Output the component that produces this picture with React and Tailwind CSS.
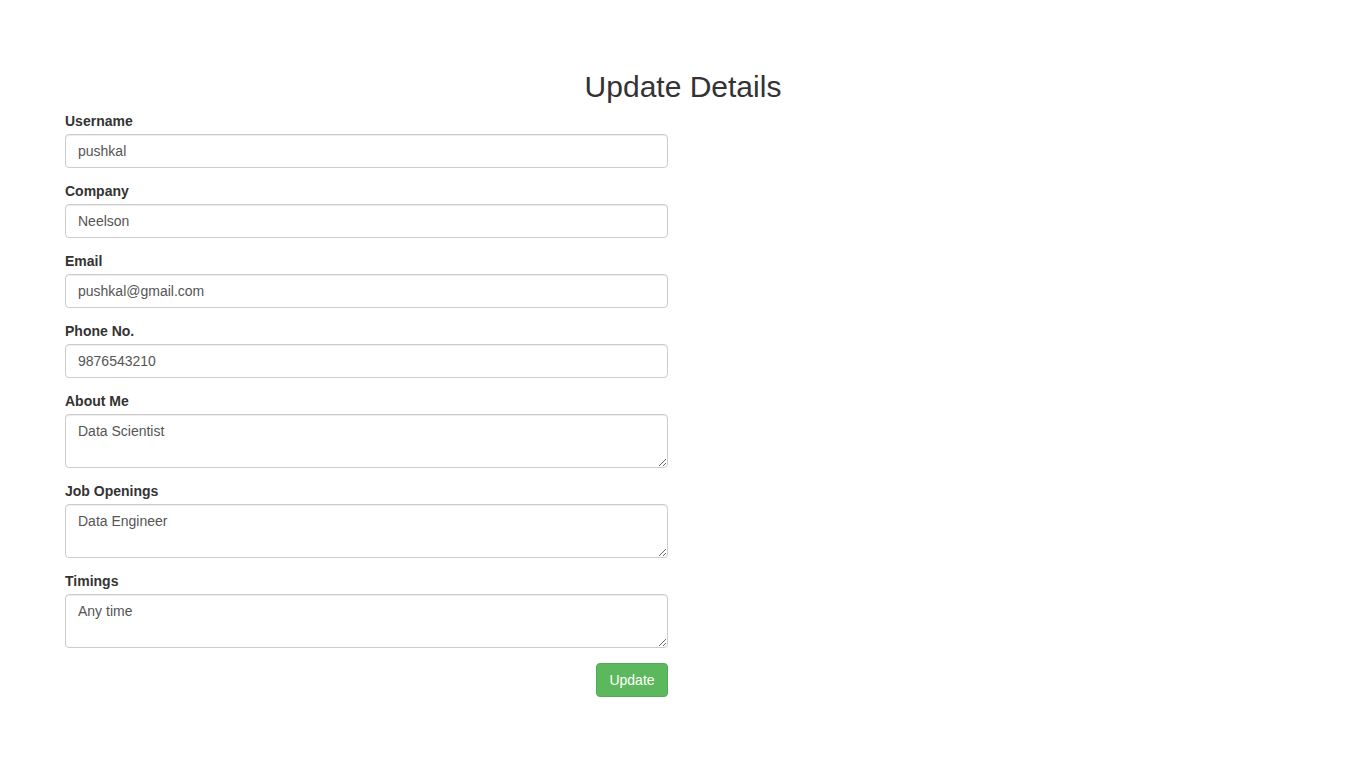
import React from "react";

const fields = [
  { label: "Username", value: "pushkal", type: "input" },
  { label: "Company", value: "Neelson", type: "input" },
  { label: "Email", value: "pushkal@gmail.com", type: "input" },
  { label: "Phone No.", value: "9876543210", type: "input" },
  { label: "About Me", value: "Data Scientist", type: "textarea" },
  { label: "Job Openings", value: "Data Engineer", type: "textarea" },
  { label: "Timings", value: "Any time", type: "textarea" },
];

const ctrl =
  "block w-full rounded-[4px] border border-[#ccc] bg-white px-[12px] py-[6px] text-[14px] leading-[20px] text-[#555] shadow-[inset_0_1px_1px_rgba(0,0,0,0.075)] outline-none";

export default function App() {
  return (
    <div
      className="min-h-screen bg-white pt-[70px] text-[#333]"
      style={{ fontFamily: '"Liberation Sans", Arial, Helvetica, sans-serif' }}
    >
      <h2 className="mb-[8px] text-center text-[30px] font-normal leading-[33px] text-[#333]">
        Update Details
      </h2>
      <form className="ml-[65px] w-[603px]" onSubmit={(e) => e.preventDefault()}>
        {fields.map((f) => (
          <div key={f.label} className="mb-[13px]">
            <label className="mb-[3px] block text-[14px] font-bold leading-[20px] text-[#333]">
              {f.label}
            </label>
            {f.type === "input" ? (
              <input type="text" defaultValue={f.value} className={`${ctrl} h-[34px]`} />
            ) : (
              <textarea defaultValue={f.value} className={`${ctrl} h-[54px] resize-y`} />
            )}
          </div>
        ))}
        <div className="flex justify-end pt-[2px]">
          <button
            type="submit"
            className="h-[34px] w-[72px] rounded-[4px] border border-[#4cae4c] bg-[#5cb85c] text-[14px] leading-[20px] text-white"
          >
            Update
          </button>
        </div>
      </form>
    </div>
  );
}
